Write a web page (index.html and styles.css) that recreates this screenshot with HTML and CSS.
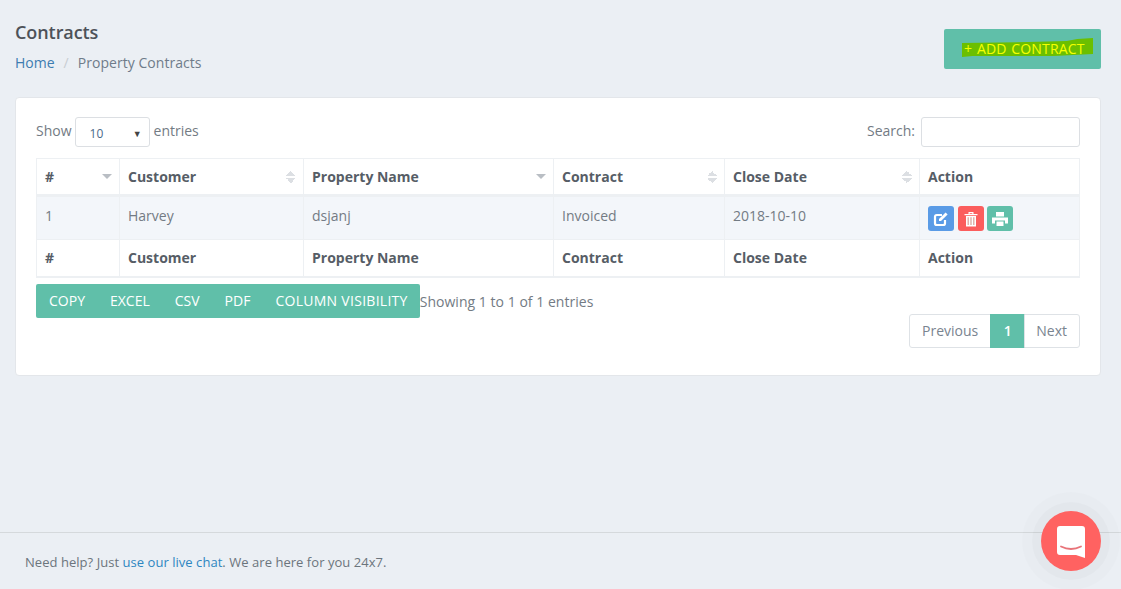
FILE: index.html
```html
<!DOCTYPE html>
<html lang="en">
<head>
<meta charset="utf-8">
<title>Contracts</title>
<link rel="stylesheet" href="styles.css">
</head>
<body>
<div class="page">
  <header class="page-head">
    <div>
      <h1 class="title">Contracts</h1>
      <nav class="crumbs"><a href="#">Home</a><span class="sep">/</span><span class="crumb-here">Property Contracts</span></nav>
    </div>
    <a class="add-btn" href="#"><span class="marker">+ ADD CONTRACT</span></a>
  </header>

  <section class="card">
    <div class="controls">
      <div class="length"><span class="lbl">Show</span><span class="select"><span class="select-val">10</span><span class="select-arrow">▼</span></span><span class="lbl">entries</span></div>
      <div class="search"><span class="lbl">Search:</span><span class="search-input"></span></div>
    </div>
    <table class="grid">
      <colgroup>
        <col class="c1"><col class="c2"><col class="c3"><col class="c4"><col class="c5"><col class="c6">
      </colgroup>
      <thead>
        <tr>
          <th><span class="th-in">#<i class="sort down"></i></span></th>
          <th><span class="th-in">Customer<i class="sort both"></i></span></th>
          <th><span class="th-in">Property Name<i class="sort down"></i></span></th>
          <th><span class="th-in">Contract<i class="sort both"></i></span></th>
          <th><span class="th-in">Close Date<i class="sort both"></i></span></th>
          <th>Action</th>
        </tr>
      </thead>
      <tbody>
        <tr>
          <td>1</td><td>Harvey</td><td>dsjanj</td><td>Invoiced</td><td>2018-10-10</td>
          <td class="actions">
            <a class="act blue" href="#"><svg viewBox="0 0 16 16" width="16" height="16"><path d="M12 9v3.200A1.800 1.800 0 0 1 10.200 14H3.800A1.800 1.800 0 0 1 2 12.200V5.800A1.800 1.800 0 0 1 3.800 4H9" fill="none" stroke="#fff" stroke-width="2.200"/><path d="M6 8 12.600 1.400l2 2L8 10H6z" fill="#fff"/></svg></a>
            <a class="act red" href="#"><svg viewBox="0 0 16 16" width="16" height="16"><path d="M1.500 3h13v1.300h-13zM5.500 3V1h5v2H9.300V2.200H6.700V3z" fill="#fff"/><path d="M3 5h10v10.500H3z" fill="#fff"/><path d="M5.200 6.300v7.800M8 6.300v7.800M10.800 6.300v7.800" stroke="#d9a9a0" stroke-width="1.300"/></svg></a>
            <a class="act green" href="#"><svg viewBox="0 0 16 16" width="16" height="16"><path d="M4 1h8v4.500H4zM0 6.500h16v6h-3V9.500H3v3H0z" fill="#fff"/><path d="M4.500 10.500h7V15h-7z" fill="#fff"/></svg></a>
          </td>
        </tr>
      </tbody>
      <tfoot>
        <tr><th>#</th><th>Customer</th><th>Property Name</th><th>Contract</th><th>Close Date</th><th>Action</th></tr>
      </tfoot>
    </table>
    <div class="tools">
      <div class="btn-group">
        <a href="#">COPY</a><a href="#">EXCEL</a><a href="#">CSV</a><a href="#">PDF</a><a class="wide" href="#">COLUMN VISIBILITY</a>
      </div>
      <div class="info">Showing 1 to 1 of 1 entries</div>
    </div>
    <div class="pager">
      <a href="#">Previous</a><a class="on" href="#">1</a><a class="next" href="#">Next</a>
    </div>
  </section>
</div>

<footer class="foot">
  Need help? Just <a href="#">use our live chat</a>. We are here for you 24x7.
</footer>

<div class="chat-btn">
  <svg viewBox="0 0 28 32" width="28" height="32"><path d="M3 0h22a3 3 0 0 1 3 3v29l-9-3H3a3 3 0 0 1-3-3V3a3 3 0 0 1 3-3z" fill="#fff"/><path d="M4 20.500q10 5 20 0" fill="none" stroke="#e8747a" stroke-width="1.800" stroke-linecap="round"/></svg>
</div>
</body>
</html>
```
FILE: styles.css
```css
* { box-sizing: border-box; }
html, body { margin: 0; height: 100%; }
body {
  background: #ebeff4;
  font-family: "Open Sans", sans-serif;
  font-size: 14px;
  color: #737b84;
  height: 589px;
  overflow: hidden;
  position: relative;
}
a { text-decoration: none; color: inherit; }
.page { padding: 0 20px 0 15px; }
.page-head {
  display: flex;
  justify-content: space-between;
  align-items: flex-start;
  height: 97px;
  padding-top: 20px;
}
.title {
  margin: 0;
  font-size: 18px;
  font-weight: 600;
  line-height: 24px;
  letter-spacing: -.08px;
  color: #4d5259;
}
.crumbs { margin-top: 9px; line-height: 20px; color: #6f7c8a; font-size: 14px; }
.crumbs a { color: #3d7cb0; }
.sep { color: #c8cdd2; margin: 0 9px; }
.crumb-here { letter-spacing: .04px; }
.add-btn {
  width: 157px;
  height: 40px;
  margin-top: 9px;
  background: #60bfa9;
  border-radius: 2px;
  display: block;
  padding: 9px 0 0 18px;
}
.marker {
  display: block;
  width: 131px;
  height: 20px;
  padding-left: 2px;
  background: #6bbf00;
  clip-path: polygon(0 5px, 50% 4px, 80% 3px, 88% 1px, 100% 0, 100% 16px, 70% 18px, 35% 18px, 8% 18px, 0 19px);
  color: #f6ff00;
  font-size: 14px;
  letter-spacing: .15px;
  word-spacing: 1px;
  line-height: 22px;
  white-space: nowrap;
}
.card {
  background: #fff;
  border: 1px solid #e3e6ea;
  border-radius: 4px;
  width: 1086px;
  height: 279px;
  padding: 19px 20px 20px;
}
.controls {
  display: flex;
  justify-content: space-between;
  align-items: center;
  height: 30px;
  margin-bottom: 11px;
}
.length, .search { display: flex; align-items: center; gap: 3px; }
.search { gap: 6px; }
.lbl { margin-bottom: 3px; }
.length .lbl:last-child { margin-left: 1px; }
.select {
  width: 75px;
  height: 30px;
  border: 1px solid #dcdfe3;
  border-radius: 3px;
  display: flex;
  align-items: center;
  justify-content: space-between;
  padding: 2px 7px 0 14px;
  font-size: 12px;
  color: #4b6a8a;
}
.select-arrow { font-size: 9px; color: #444; }
.search-input {
  width: 159px;
  height: 30px;
  border: 1px solid #dcdfe3;
  border-radius: 3px;
}
.grid {
  width: 1043px;
  border-collapse: collapse;
  table-layout: fixed;
  border: 1px solid #edf0f3;
  border-bottom: 2px solid #edf0f3;
}
.c1 { width: 83px; }
.c2 { width: 184px; }
.c3 { width: 250px; }
.c4 { width: 171px; }
.c5 { width: 195px; }
.c6 { width: 160px; }
.grid th, .grid td {
  text-align: left;
  padding: 0 8px;
  border-left: 1px solid #edf0f3;
}
.grid th { color: #565d66; font-weight: 700; font-size: 14px; }
.grid thead tr { height: 37px; }
.grid thead th { border-bottom: 3px solid #edf0f3; }
.grid tbody tr { height: 44px; background: #f3f6fa; }
.grid tbody td { padding-bottom: 6px; }
.grid tfoot tr { height: 37px; }
.grid tfoot th { border-top: 1px solid #edf0f3; }
.th-in { display: flex; justify-content: space-between; align-items: center; }
.sort { display: block; width: 10px; margin-right: -1px; }
.sort.down { height: 4px; border-left: 5px solid transparent; border-right: 5px solid transparent; border-top: 5px solid #b9bec4; }
.sort.both { height: 12px; background:
  linear-gradient(to top right, transparent 50%, #dcdfe3 50%) 0 7px / 5px 5px no-repeat,
  linear-gradient(to top left, transparent 50%, #dcdfe3 50%) 5px 7px / 5px 5px no-repeat,
  linear-gradient(to bottom right, transparent 50%, #dcdfe3 50%) 0 0 / 5px 5px no-repeat,
  linear-gradient(to bottom left, transparent 50%, #dcdfe3 50%) 5px 0 / 5px 5px no-repeat;
}
.actions { font-size: 0; }
.grid tbody td.actions { padding-bottom: 0; padding-top: 1px; }
.act {
  display: inline-flex;
  align-items: center;
  justify-content: center;
  width: 26px;
  height: 25px;
  margin-right: 4px;
  border-radius: 3px;
}
.act + .act + .act { margin-left: -1px; }
.blue { background: #5a9be6; }
.red { background: #fb5d5d; }
.green { background: #60bfa9; }
.tools { display: flex; align-items: center; margin-top: 6px; }
.btn-group {
  display: flex;
  height: 34px;
  background: #60bfa9;
  border-radius: 2px;
  color: #fff;
  font-size: 14px;
  line-height: 34px;
  padding: 0 12px 0 13px;
  gap: 25px;
  white-space: nowrap;
}
.wide { letter-spacing: .28px; }
.info { letter-spacing: .03px; margin-top: 2px; }
.pager {
  display: flex;
  justify-content: flex-end;
  margin-top: -4px;
  height: 34px;
}
.pager a {
  display: block;
  border: 1px solid #dee2e6;
  line-height: 32px;
  padding: 0 12px;
  color: #7a8490;
  margin-left: -1px;
}
.pager a:first-child { border-radius: 3px 0 0 3px; }
.pager a:last-child { border-radius: 0 3px 3px 0; }
.pager a.next { padding-left: 11px; }
.pager a.on { background: #60bfa9; border-color: #60bfa9; color: #fff; font-weight: 600; width: 35px; text-align: center; padding: 0; }
.foot {
  margin-top: 156px;
  border-top: 1px solid #d5d9dc;
  padding: 19px 25px;
  font-size: 13px;
  letter-spacing: .04px;
  line-height: 20px;
  color: #6c757d;
}
.foot a { color: #2e86c1; }
.chat-btn {
  position: absolute;
  left: 1041px;
  top: 511px;
  width: 60px;
  height: 60px;
  border-radius: 50%;
  background: #ff6261;
  box-shadow: 0 0 0 9px rgba(0, 0, 0, .02), 0 0 0 19px rgba(0, 0, 0, .012);
  display: flex;
  align-items: center;
  justify-content: center;
  padding-top: 1px;
}
```
